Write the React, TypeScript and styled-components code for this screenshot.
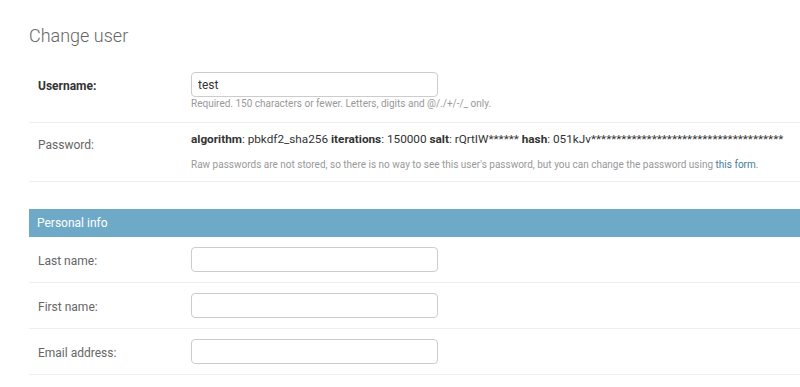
import styled, { createGlobalStyle } from 'styled-components';

const GlobalStyle = createGlobalStyle`
  html, body {
    margin: 0;
    padding: 0;
    background: #fff;
  }
  body {
    font-family: Roboto, "Liberation Sans", Arial, sans-serif;
    font-size: 12px;
    color: #333;
    overflow: hidden;
  }
`;

const Page = styled.div`
  padding: 24px 0 0 29px;
`;

const Title = styled.h1`
  margin: 0 0 14px;
  font-size: 18px;
  line-height: 24px;
  font-weight: 300;
  color: #666;
`;

const Fieldset = styled.section`
  margin: 0;
`;

const FieldsetHeader = styled.h2`
  margin: 27px 0 0;
  padding: 8px;
  font-size: 12px;
  line-height: 12px;
  font-weight: 400;
  color: #fff;
  background: #6fa9c8;
`;

const Row = styled.div<{ $readonly?: boolean }>`
  display: flex;
  padding: ${(p) => (p.$readonly ? '8px 10px 8px 9px' : '10px 10px 10px 9px')};
  border-bottom: 1px solid #eee;
`;

const Label = styled.label<{ $required?: boolean }>`
  flex-shrink: 0;
  width: 153px;
  padding-top: 8px;
  line-height: 13px;
  font-size: 12px;
  font-weight: ${(p) => (p.$required ? 700 : 400)};
  color: ${(p) => (p.$required ? '#333' : '#666')};
`;

const Field = styled.div`
  display: flex;
  flex-direction: column;
  min-width: 0;
`;

const TextInput = styled.input`
  box-sizing: border-box;
  width: 247px;
  height: 25px;
  margin: 0;
  padding: 0 6px;
  border: 1px solid #ccc;
  border-radius: 4px;
  font-family: inherit;
  font-size: 12px;
  color: #333;
  background: #fff;
  outline: none;
`;

const Help = styled.p<{ $gap?: number }>`
  margin: ${(p) => p.$gap ?? 0}px 0 1px;
  font-size: 10px;
  line-height: 14px;
  color: #999;
  white-space: nowrap;

  a {
    color: #447e9b;
    text-decoration: none;
  }
`;

const HashLine = styled.div`
  font-size: 11.75px;
  line-height: 16px;
  color: #333;
  white-space: nowrap;

  strong {
    font-weight: 700;
  }
`;

const hashParts: [string, string][] = [
  ['algorithm', 'pbkdf2_sha256'],
  ['iterations', '150000'],
  ['salt', 'rQrtIW******'],
  ['hash', '051kJv' + '*'.repeat(38)],
];

const personal = ['Last name:', 'First name:', 'Email address:'];

export default function App() {
  return (
    <>
      <GlobalStyle />
      <Page>
        <Title>Change user</Title>
        <Fieldset>
          <Row>
            <Label $required>Username:</Label>
            <Field>
              <TextInput defaultValue="test" />
              <Help>Required. 150 characters or fewer. Letters, digits and @/./+/-/_ only.</Help>
            </Field>
          </Row>
          <Row $readonly>
            <Label>Password:</Label>
            <Field>
              <HashLine>
                {hashParts.map(([k, v], i) => (
                  <span key={k}>
                    {i > 0 && ' '}
                    <strong>{k}</strong>: {v}
                  </span>
                ))}
              </HashLine>
              <Help $gap={11}>
                Raw passwords are not stored, so there is no way to see this user's password, but you can change the
                password using <a href="#">this form</a>.
              </Help>
            </Field>
          </Row>
        </Fieldset>
        <Fieldset>
          <FieldsetHeader>Personal info</FieldsetHeader>
          {personal.map((name) => (
            <Row key={name}>
              <Label>{name}</Label>
              <Field>
                <TextInput />
              </Field>
            </Row>
          ))}
        </Fieldset>
      </Page>
    </>
  );
}
